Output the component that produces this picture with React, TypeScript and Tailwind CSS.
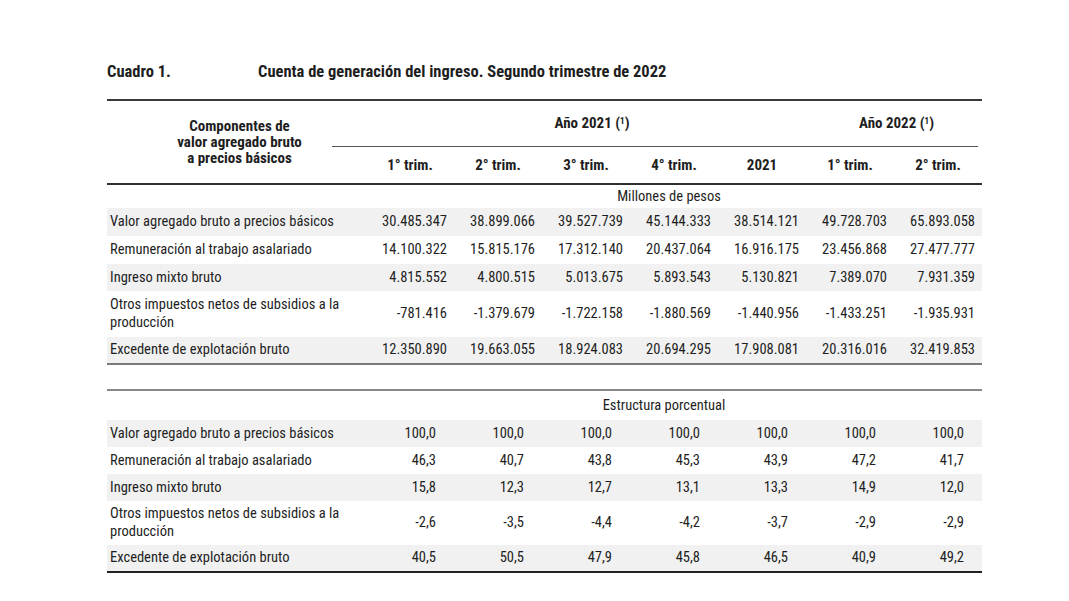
const cols = ["1° trim.", "2° trim.", "3° trim.", "4° trim.", "2021", "1° trim.", "2° trim."];

type Line = { label: React.ReactNode; values: string[]; h: string };

const otros = (
  <>
    Otros impuestos netos de subsidios a la
    <br />
    producción
  </>
);

const pesos: Line[] = [
  {
    label: "Valor agregado bruto a precios básicos",
    values: ["30.485.347", "38.899.066", "39.527.739", "45.144.333", "38.514.121", "49.728.703", "65.893.058"],
    h: "h-[28px]",
  },
  {
    label: "Remuneración al trabajo asalariado",
    values: ["14.100.322", "15.815.176", "17.312.140", "20.437.064", "16.916.175", "23.456.868", "27.477.777"],
    h: "h-[28px]",
  },
  {
    label: "Ingreso mixto bruto",
    values: ["4.815.552", "4.800.515", "5.013.675", "5.893.543", "5.130.821", "7.389.070", "7.931.359"],
    h: "h-[27px]",
  },
  {
    label: otros,
    values: ["-781.416", "-1.379.679", "-1.722.158", "-1.880.569", "-1.440.956", "-1.433.251", "-1.935.931"],
    h: "h-[46px]",
  },
  {
    label: "Excedente de explotación bruto",
    values: ["12.350.890", "19.663.055", "18.924.083", "20.694.295", "17.908.081", "20.316.016", "32.419.853"],
    h: "h-[26px]",
  },
];

const estructura: Line[] = [
  { label: "Valor agregado bruto a precios básicos", values: ["100,0", "100,0", "100,0", "100,0", "100,0", "100,0", "100,0"], h: "h-[27px]" },
  { label: "Remuneración al trabajo asalariado", values: ["46,3", "40,7", "43,8", "45,3", "43,9", "47,2", "41,7"], h: "h-[27px]" },
  { label: "Ingreso mixto bruto", values: ["15,8", "12,3", "12,7", "13,1", "13,3", "14,9", "12,0"], h: "h-[27px]" },
  { label: otros, values: ["-2,6", "-3,5", "-4,4", "-4,2", "-3,7", "-2,9", "-2,9"], h: "h-[44px]" },
  { label: "Excedente de explotación bruto", values: ["40,5", "50,5", "47,9", "45,8", "46,5", "40,9", "49,2"], h: "h-[26px]" },
];

function DataRow({ row, shade, pct }: { row: Line; shade: boolean; pct?: boolean }) {
  return (
    <div className={`grid grid-cols-[259px_repeat(7,88px)] items-center ${shade ? "bg-[#f1f1f1]" : ""} ${row.h}`}>
      <div className="pl-[3px] leading-[18px]">{row.label}</div>
      {row.values.map((v, i) => (
        <div key={i} className={`text-right ${pct ? "pr-[18px]" : "pr-[7px]"}`}>
          {v}
        </div>
      ))}
    </div>
  );
}

export default function App() {
  return (
    <div className="min-h-screen bg-white text-[#1e1e1e] font-['Roboto_Condensed','Liberation_Sans',sans-serif] text-[14.5px]">
      <div className="ml-[107px] w-[875px] pt-[63px]">
        {/* title */}
        <div className="flex h-[18px] items-center text-[16.5px] font-bold leading-[18px]">
          <span className="w-[151px]">Cuadro 1.</span>
          <span>Cuenta de generación del ingreso. Segundo trimestre de 2022</span>
        </div>

        {/* header */}
        <div className="mt-[18px] border-t-2 border-[#3a3a3a]">
          <div className="grid h-[82px] grid-cols-[259px_616px] text-[15px]">
            <div className="flex items-center justify-center pl-[6px] text-center font-bold leading-[16px]">
              Componentes de
              <br />
              valor agregado bruto
              <br />a precios básicos
            </div>
            <div className="flex flex-col">
              <div className="ml-[-34px] mr-[4px] flex h-[46px] items-center border-b border-[#555] font-bold">
                <div className="w-[520px] text-center">
                  Año 2021 (<sup className="text-[9px]">1</sup>)
                </div>
                <div className="flex-1 pr-[44px] text-right">
                  Año 2022 (<sup className="text-[9px]">1</sup>)
                </div>
              </div>
              <div className="grid flex-1 grid-cols-7 items-center font-bold">
                {cols.map((c, i) => (
                  <div key={i} className="text-center">
                    {c}
                  </div>
                ))}
              </div>
            </div>
          </div>
        </div>

        {/* millones de pesos */}
        <div className="border-t-2 border-[#2e2e2e]">
          <div className="flex h-[23px] items-center pl-[259px]">
            <div className="w-[616px] pr-[10px] text-center">Millones de pesos</div>
          </div>
          {pesos.map((r, i) => (
            <DataRow key={i} row={r} shade={i % 2 === 0} />
          ))}
        </div>
        <div className="border-t-2 border-[#7a7a7a]" />

        {/* estructura porcentual */}
        <div className="mt-[24px] border-t-2 border-[#888]">
          <div className="flex h-[29px] items-center pl-[259px]">
            <div className="w-[616px] pr-[20px] text-center">Estructura porcentual</div>
          </div>
          {estructura.map((r, i) => (
            <DataRow key={i} row={r} shade={i % 2 === 0} pct />
          ))}
        </div>
        <div className="border-t-2 border-[#222]" />
      </div>
    </div>
  );
}
